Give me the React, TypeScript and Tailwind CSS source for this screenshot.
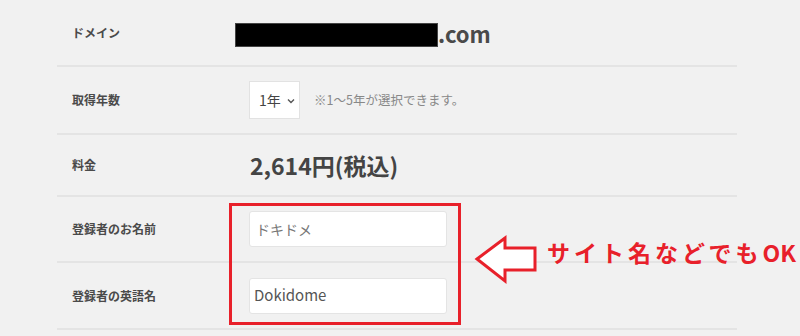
const FONT = "font-['Noto_Sans_CJK_JP','Noto_Sans',sans-serif]";

const Row = ({
  label,
  height,
  children,
}: {
  label: string;
  height: string;
  children: React.ReactNode;
}) => (
  <div className={`flex items-center border-b-2 border-[#e4e4e4] ${height}`}>
    <div className="w-[178px] shrink-0 pl-[15px] text-[12px] font-bold text-[#4a4a4a]">{label}</div>
    <div className="flex items-center">{children}</div>
  </div>
);

export default function App() {
  return (
    <div className={`relative h-[336px] w-[800px] overflow-hidden bg-[#f1f1f1] ${FONT}`}>
      <div className="ml-[57px] w-[680px]">
        <Row label="ドメイン" height="h-[67px]">
          <div className="mt-[4px] h-[24px] w-[203px] border border-[#444] bg-black" />
          <span className="text-[22px] font-bold leading-none text-[#4a4a4a]">.com</span>
        </Row>

        <Row label="取得年数" height="h-[68px]">
          <div className="ml-[14px] flex h-[38px] w-[51px] items-center gap-[6px] border border-[#e2e2e2] bg-white pl-[9px] text-[14px] text-[#444]">
            <span>1年</span>
            <svg width="8" height="6" viewBox="0 0 8 6" className="mt-[2px]">
              <path d="M1 1.5 L4 4.5 L7 1.5" fill="none" stroke="#555" strokeWidth="1.4" />
            </svg>
          </div>
          <span className="ml-[14px] text-[12.5px] text-[#888]">※1〜5年が選択できます。</span>
        </Row>

        <Row label="料金" height="h-[62px]">
          <span className="ml-[15px] text-[23px] font-bold text-[#444]">2,614円(税込)</span>
        </Row>

        <Row label="登録者のお名前" height="h-[66px]">
          <div className="ml-[14px] flex h-[36px] w-[198px] items-center rounded-[3px] border border-[#e4e4e4] bg-white pl-[6px] text-[14px] text-[#777]">
            ドキドメ
          </div>
        </Row>

        <Row label="登録者の英語名" height="h-[67px]">
          <div className="ml-[14px] flex h-[36px] w-[198px] items-center rounded-[3px] border border-[#e4e4e4] bg-white pl-[4px] text-[15px] text-[#555]">
            Dokidome
          </div>
        </Row>
      </div>

      <div className="absolute left-[229px] top-[203px] h-[122px] w-[232px] border-[3px] border-[#e8202a]" />

      <svg className="absolute left-[474px] top-[235px]" width="66" height="50" viewBox="0 0 66 50">
        <path
          d="M3 24 L31 3 L31 13 L61 13 L61 35 L31 35 L31 46 Z"
          fill="#ffffff"
          stroke="#e8202a"
          strokeWidth="3"
          strokeLinejoin="miter"
        />
      </svg>

      <div className="absolute left-[547px] top-[241px] whitespace-nowrap text-[23px] font-bold leading-none tracking-[4px] text-[#e8202a]">
        サイト名などでも<span className="tracking-normal">OK</span>
      </div>
    </div>
  );
}
